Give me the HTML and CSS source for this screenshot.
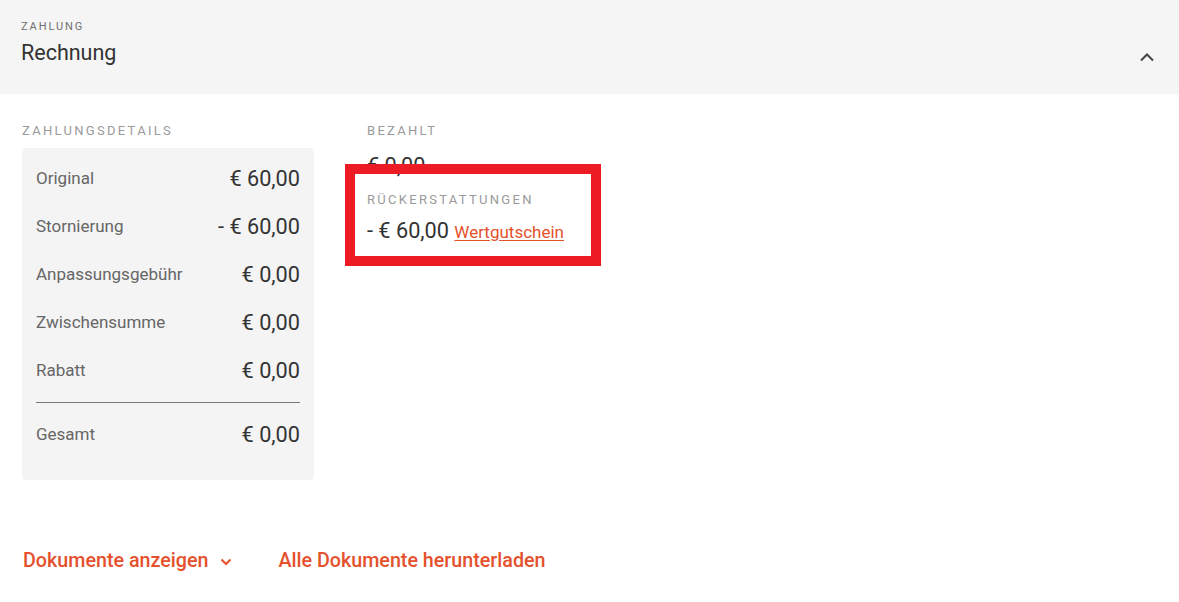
FILE: index.html
```html
<!DOCTYPE html>
<html lang="de">
<head>
<meta charset="utf-8">
<title>Zahlung</title>
<link rel="stylesheet" href="styles.css">
</head>
<body>
<section class="panel">
  <header class="panel-head">
    <div class="head-text">
      <div class="eyebrow">ZAHLUNG</div>
      <h1 class="title">Rechnung</h1>
    </div>
    <svg class="collapse" width="16" height="10" viewBox="0 0 16 10" aria-hidden="true"><path d="M2 8.5 L8 2.5 L14 8.5" fill="none" stroke="#444" stroke-width="2"/></svg>
  </header>
  <div class="panel-body">
    <div class="cols">
      <div class="details">
        <div class="label">ZAHLUNGSDETAILS</div>
        <div class="card">
          <div class="row"><span class="name">Original</span><span class="val">€ 60,00</span></div>
          <div class="row"><span class="name">Stornierung</span><span class="val">- € 60,00</span></div>
          <div class="row"><span class="name">Anpassungsgebühr</span><span class="val">€ 0,00</span></div>
          <div class="row"><span class="name">Zwischensumme</span><span class="val">€ 0,00</span></div>
          <div class="row"><span class="name">Rabatt</span><span class="val">€ 0,00</span></div>
          <div class="divider"></div>
          <div class="row"><span class="name">Gesamt</span><span class="val">€ 0,00</span></div>
        </div>
      </div>
      <div class="summary">
        <div class="label">BEZAHLT</div>
        <div class="amount">€ 0,00</div>
        <div class="refund">
          <div class="label">RÜCKERSTATTUNGEN</div>
          <div class="amount">- € 60,00 <a class="voucher" href="#">Wertgutschein</a></div>
          <div class="highlight"></div>
        </div>
      </div>
    </div>
    <div class="actions">
      <a class="action" href="#">Dokumente anzeigen
        <svg class="chev" width="12" height="8" viewBox="0 0 12 8" aria-hidden="true"><path d="M1.5 1.5 L6 6 L10.5 1.5" fill="none" stroke="#e4512c" stroke-width="2"/></svg>
      </a>
      <a class="action" href="#">Alle Dokumente herunterladen</a>
    </div>
  </div>
</section>
</body>
</html>
```
FILE: styles.css
```css
* { box-sizing: border-box; }
html, body { margin: 0; padding: 0; background: #fff; }
body { font-family: Roboto, "Liberation Sans", sans-serif; color: #333; }

.panel-head {
  background: #f5f5f5;
  height: 94px;
  padding: 20px 24px 0 21px;
  display: flex;
  justify-content: space-between;
  align-items: flex-start;
}
.eyebrow {
  font-size: 11px;
  letter-spacing: 1.9px;
  color: #6f6f6f;
  line-height: 14px;
}
.title {
  margin: 6px 0 0;
  font-size: 21.5px;
  font-weight: 400;
  color: #333;
  line-height: 26px;
}
.collapse { margin-top: 32px; }

.panel-body { padding: 30px 0 0 22px; }
.cols { display: flex; }
.details { width: 323px; }
.label {
  font-size: 13px;
  letter-spacing: 2.3px;
  color: #9a9a9a;
  line-height: 14px;
}
.card {
  margin-top: 10px;
  width: 292px;
  background: #f4f4f4;
  border-radius: 4px;
  padding: 6px 14px 22px 14px;
}
.row {
  display: flex;
  justify-content: space-between;
  align-items: center;
  height: 48px;
}
.divider { height: 1px; background: #777; margin: 8px 0 7px; }
.name { font-size: 17px; color: #666; }
.val { font-size: 21.7px; color: #333; }

.summary { position: relative; padding-left: 22px; }
.summary .amount { font-size: 21.7px; color: #333; margin-top: 15px; line-height: 26px; }
.refund { position: relative; margin-top: 14px; }
.refund .amount { margin-top: 11px; }
.voucher { font-size: 17px; color: #e4512c; text-decoration: underline; text-underline-offset: 2px; }
.highlight {
  position: absolute;
  left: -22px;
  top: -29px;
  width: 256px;
  height: 102px;
  border: 10px solid #ed1c24;
}

.actions { display: flex; gap: 46px; margin-top: 69px; padding-left: 1px; }
.action {
  font-size: 19.7px;
  font-weight: 500;
  color: #e4512c;
  text-decoration: none;
  display: inline-flex;
  align-items: center;
  gap: 12px;
}
.chev { margin-top: 2px; }
```
